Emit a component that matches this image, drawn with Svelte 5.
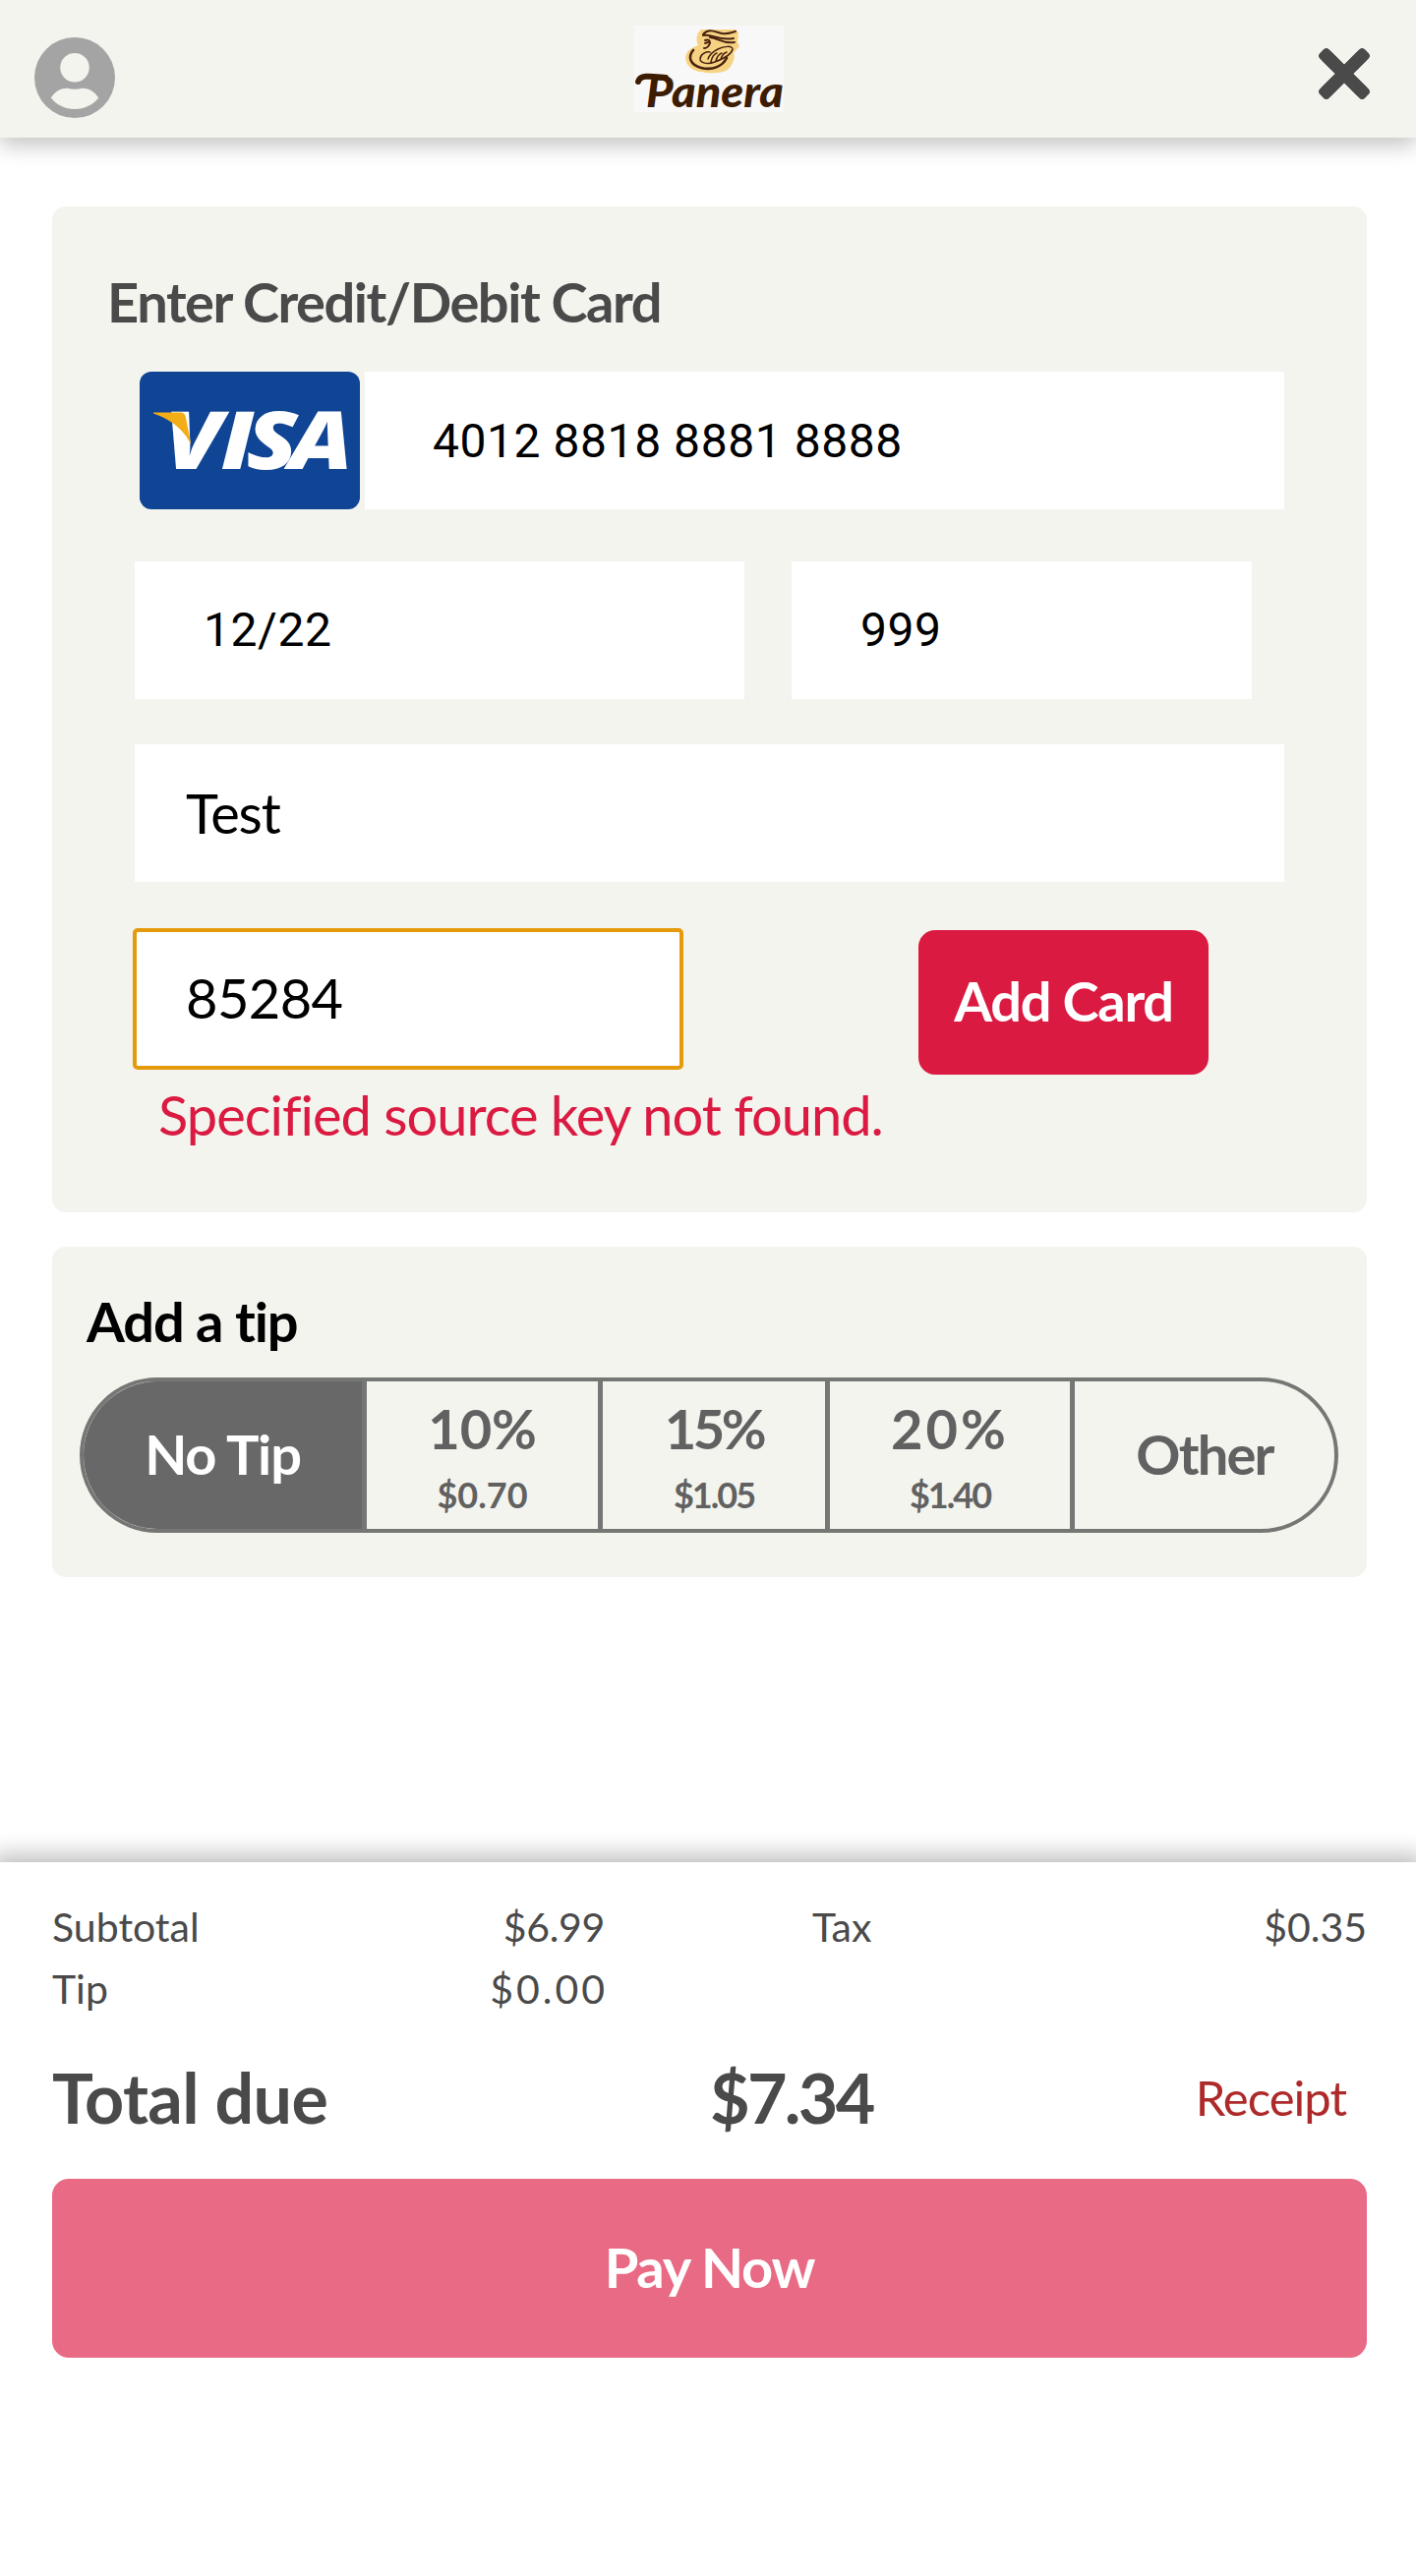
<script>
  const tips = [
    { id: 'none', label: 'No Tip' },
    { id: 'ten', label: '10%', amount: '$0.70' },
    { id: 'fifteen', label: '15%', amount: '$1.05' },
    { id: 'twenty', label: '20%', amount: '$1.40' },
    { id: 'other', label: 'Other' }
  ];
  let selected = $state('none');
</script>

<div class="page">
  <header class="topbar">
    <svg class="avatar" viewBox="2 2 20 20" aria-label="Account">
      <path fill="#a4a4a4" fill-rule="evenodd" d="M12 2a10 10 0 1 0 0 20 10 10 0 0 0 0-20Zm0 3.9a3.6 3.6 0 1 1 0 7.2 3.6 3.6 0 0 1 0-7.2ZM6.1 17c.9-1.5 2.4-2.5 4.1-2.4 1.2.35 2.400.35 3.600 0 1.700-.1 3.200.9 4.100 2.400-1.300 1.700-3.500 2.800-5.900 2.800s-4.600-1.100-5.900-2.800Z" />
    </svg>
    <svg class="logo" viewBox="0 0 152 88" aria-label="Panera">
      <rect width="152" height="88" fill="#f8f8f8" />
      <path fill="#f6d382" d="M68 4H103l3 3-1 10 2 4-6 7c2 5-1 12-6 17-7 4-18 4-27 2C56 46 50 36 53 29c2-5 7-7 12-9-3-6-1-13 3-16Z" />
      <g fill="none" stroke="#4a2310" stroke-linecap="round">
        <path stroke-width="2" d="M70 9c6-7 13-2 19-1 6 1 10-1 14-2M70 10c10-2 15 6 31 3M77 12c9 1 13 7 25 5M72 15c5-2 6 2 4 5s-3 3-5 3M72 18l3-1" />
        <path stroke-width="2.600" d="M60 25c-6 7-3 15 8 18 12 3 22-2 26-10" />
        <path stroke-width="1.500" d="M77 27c-5-1-10 3-10 7s7 6 15 3 17-8 18-13c0-4-9-3-15 0s-9 7-10 10M78 37c1-5 3-8 6-9M83 36c1-4 3-7 6-8M88 34c1-3 3-6 6-7" />
      </g>
      <path fill="none" stroke="#3d1c02" stroke-width="6" stroke-linecap="round" d="M4 57C6 49 20 52 32 53" />
      <text class="wordmark" x="12" y="83" textLength="140" lengthAdjust="spacingAndGlyphs">Panera</text>
    </svg>
    <svg class="close" viewBox="0 0 52 52" aria-label="Close">
      <path fill="#4a4a4a" stroke="#4a4a4a" stroke-width="8" stroke-linejoin="round" d="M7.800 4.200 26 22.400 44.200 4.200 47.800 7.800 29.600 26 47.800 44.200 44.200 47.800 26 29.600 7.800 47.800 4.200 44.200 22.400 26 4.200 7.800Z" />
      <path d="M8 8 44 44M44 8 8 44" stroke="#4a4a4a" stroke-width="13" />
    </svg>
  </header>

  <main>
    <section class="panel card-panel">
      <h2>Enter Credit/Debit Card</h2>
      <div class="form">
        <div class="number-row">
          <svg class="visa" viewBox="0 0 224 140" aria-label="Visa">
            <rect width="224" height="140" rx="12" fill="#0f4594" />
            <text class="visa-text" transform="scale(1.18 1)" x="21.500 70 92 129" y="99.500">VISA</text>
            <path fill="#f3ad16" d="M14 41.500h27c4 0 5.500 2 6 5.500l5.300 27C47 63 36 50 14 42.500Z" />
          </svg>
          <div class="field number">4012 8818 8881 8888</div>
        </div>
        <div class="code-row">
          <div class="field expiry">12/22</div>
          <div class="field cvv">999</div>
        </div>
        <div class="field name">Test</div>
        <div class="zip-row">
          <div class="field zip">85284</div>
          <button class="add">Add Card</button>
        </div>
        <p class="error">Specified source key not found.</p>
      </div>
    </section>

    <section class="panel tip-panel">
      <h3>Add a tip</h3>
      <div class="tips">
        {#each tips as tip (tip.id)}
          <button class="tip {tip.id}" class:active={selected === tip.id} onclick={() => (selected = tip.id)}>
            <span class="tip-label">{tip.label}</span>
            {#if tip.amount}<span class="amount">{tip.amount}</span>{/if}
          </button>
        {/each}
      </div>
    </section>
  </main>

  <footer>
    <div class="lines">
      <div class="line"><span>Subtotal</span><span class="subtotal">$6.99</span></div>
      <div class="line"><span>Tax</span><span>$0.35</span></div>
      <div class="line"><span>Tip</span><span class="tip-total">$0.00</span></div>
    </div>
    <div class="total">
      <span class="due">Total due</span>
      <span class="sum">$7.34</span>
      <span class="receipt">Receipt</span>
    </div>
    <button class="pay">Pay Now</button>
  </footer>
</div>

<style>
  :global(body) { background: #fff; }
  .page {
    width: 1440px;
    height: 2620px;
    display: flex;
    flex-direction: column;
    overflow: hidden;
    font-family: Lato, sans-serif;
    font-variant-ligatures: none;
    color: #4a4a4a;
  }
  .page * { box-sizing: border-box; }
  h2, h3, p { margin: 0; }
  button { font: inherit; border: 0; padding: 0; margin: 0; }
  svg { display: block; flex: none; }
  .topbar {
    flex: none;
    height: 140px;
    display: flex;
    justify-content: space-between;
    align-items: flex-start;
    padding: 26px 47px 0 35px;
    background: #f3f4ee;
    box-shadow: 0 8px 20px rgba(0, 0, 0, 0.23);
  }
  .avatar { width: 82px; height: 82px; margin-top: 12px; }
  .logo { width: 152px; height: 88px; margin-left: -11px; margin-right: 5px; overflow: visible; }
  .wordmark { font: italic 900 43px Lato, sans-serif; fill: #3d1c02; }
  .close { width: 52px; height: 52px; margin-top: 23px; }
  main { flex: none; height: 1754px; padding: 70px 50px 0 53px; }
  .panel { background: #f3f4ee; border-radius: 14px; }
  .card-panel { height: 1023px; padding: 65px 84px 0; }
  h2 { margin-left: -28px; font-size: 56px; line-height: 64px; font-weight: 700; letter-spacing: -1.45px; white-space: nowrap; }
  .form { display: flex; flex-direction: column; padding-top: 39px; }
  .field { height: 140px; display: flex; align-items: center; background: #fff; color: #000; }
  .number-row { display: flex; gap: 5px; padding-left: 5px; }
  .visa { width: 224px; height: 140px; }
  .visa-text { font: italic 800 81px "Open Sans", sans-serif; fill: #fff; }
  .number, .expiry, .cvv { font-family: Roboto, sans-serif; font-size: 48px; letter-spacing: 0.55px; }
  .number { flex: 1; padding: 1px 0 0 69px; }
  .code-row { display: flex; gap: 48px; margin-top: 53px; }
  .expiry { width: 620px; padding: 0 0 2px 70px; }
  .cvv { width: 468px; padding: 0 0 2px 70px; }
  .name { margin-top: 46px; padding: 0 0 2px 52px; font-size: 56px; letter-spacing: -1.1px; }
  .zip-row { display: flex; justify-content: space-between; align-items: flex-end; height: 149px; margin: 47px 77px 0 -2px; }
  .zip { align-self: flex-start; width: 560px; height: 144px; padding: 0 0 3px 50px; border: 4px solid #e59a0c; border-radius: 5px; font-size: 56px; letter-spacing: -0.6px; }
  .add { width: 295px; height: 147px; padding-bottom: 4px; border-radius: 17px; background: #db1a41; color: #fff; font-size: 56px; font-weight: 700; letter-spacing: -1.3px; white-space: nowrap; }
  .error { margin: 9px 0 0 24px; color: #db1a41; font-size: 56px; line-height: 64px; letter-spacing: -1px; white-space: nowrap; }
  .tip-panel { height: 336px; margin-top: 35px; padding: 44px 29px 0 28px; }
  h3 { padding-left: 7px; color: #000; font-size: 56px; line-height: 64px; font-weight: 700; letter-spacing: -1.1px; }
  .tips { display: grid; grid-template-columns: 288px 240px 231px 249px 1fr; height: 158px; margin-top: 25px; border: 4px solid #757775; border-radius: 79px; overflow: hidden; }
  .tip { display: flex; flex-direction: column; align-items: center; justify-content: center; padding-bottom: 2px; background: none; color: #616161; border-right: 5px solid #757775; font-weight: 700; font-size: 56px; line-height: 64px; letter-spacing: -1.2px; }
  .tip.ten, .tip.fifteen, .tip.twenty { padding: 5px 0 0; }
  .ten .tip-label { letter-spacing: -0.2px; }
  .fifteen .tip-label { letter-spacing: -3.5px; }
  .twenty .tip-label { letter-spacing: 3px; }
  .tip.other { border-right: 0; letter-spacing: -1.8px; }
  .tip.active { background: #686868; color: #fff; }
  .amount { font-size: 36px; line-height: 48px; margin-top: 11px; letter-spacing: 0; }
  .fifteen .amount, .twenty .amount { letter-spacing: -2px; }
  footer { flex: 1; padding: 34px 50px 0 53px; background: #fff; box-shadow: 0 0 22px 8px rgba(0, 0, 0, 0.26); }
  .lines { display: grid; grid-template-columns: 562px 564px; column-gap: 211px; font-size: 41px; line-height: 63px; }
  .line { display: flex; justify-content: space-between; }
  .subtotal { letter-spacing: -0.3px; }
  .tip-total { letter-spacing: 3px; margin-right: -3px; }
  .total { display: grid; grid-template-columns: 669px 1fr auto; align-items: center; height: 84px; margin-top: 37px; padding-right: 21px; font-size: 70px; font-weight: 700; line-height: 84px; }
  .due { letter-spacing: -0.6px; }
  .sum { letter-spacing: -2.700px; }
  .receipt { color: #ae2a2a; font-size: 49px; font-weight: 400; letter-spacing: -1px; }
  .pay { display: block; width: 1337px; height: 182px; padding-bottom: 3px; margin-top: 41px; border-radius: 17px; background: #e86a84; color: #fff; font-size: 56px; font-weight: 700; letter-spacing: -1.2px; }
</style>
